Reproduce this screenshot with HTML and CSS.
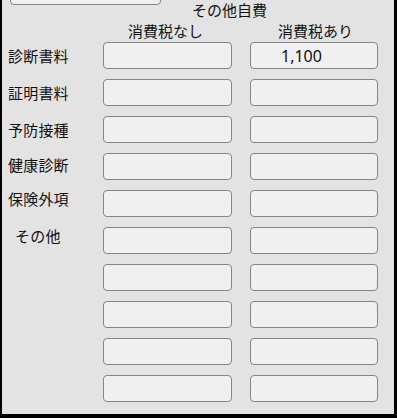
FILE: index.html
```html
<!DOCTYPE html>
<html lang="ja">
<head>
<meta charset="utf-8">
<link rel="stylesheet" href="styles.css">
</head>
<body>
<div class="frame">
  <div class="topbar">
    <div class="stub"></div>
    <div class="title">その他自費</div>
  </div>
  <div class="headrow">
    <div class="labelcol"></div>
    <div class="colhead c1">消費税なし</div>
    <div class="colhead c2">消費税あり</div>
  </div>
  <div class="rows">
    <div class="row">
      <div class="label l1">診断書料</div>
      <input class="field c1" type="text" readonly value="">
      <input class="field c2" type="text" readonly value="1,100">
    </div>
    <div class="row">
      <div class="label l1">証明書料</div>
      <input class="field c1" type="text" readonly value="">
      <input class="field c2" type="text" readonly value="">
    </div>
    <div class="row">
      <div class="label l1">予防接種</div>
      <input class="field c1" type="text" readonly value="">
      <input class="field c2" type="text" readonly value="">
    </div>
    <div class="row">
      <div class="label l0">健康診断</div>
      <input class="field c1" type="text" readonly value="">
      <input class="field c2" type="text" readonly value="">
    </div>
    <div class="row">
      <div class="label up">保険外項</div>
      <input class="field c1" type="text" readonly value="">
      <input class="field c2" type="text" readonly value="">
    </div>
    <div class="row">
      <div class="label up indent">その他</div>
      <input class="field c1" type="text" readonly value="">
      <input class="field c2" type="text" readonly value="">
    </div>
    <div class="row">
      <div class="label"></div>
      <input class="field c1" type="text" readonly value="">
      <input class="field c2" type="text" readonly value="">
    </div>
    <div class="row">
      <div class="label"></div>
      <input class="field c1" type="text" readonly value="">
      <input class="field c2" type="text" readonly value="">
    </div>
    <div class="row">
      <div class="label"></div>
      <input class="field c1" type="text" readonly value="">
      <input class="field c2" type="text" readonly value="">
    </div>
    <div class="row">
      <div class="label"></div>
      <input class="field c1" type="text" readonly value="">
      <input class="field c2" type="text" readonly value="">
    </div>
  </div>
</div>
</body>
</html>
```

FILE: styles.css
```css
html, body {
  margin: 0;
  padding: 0;
  background: #000;
}

.frame {
  box-sizing: border-box;
  width: 397px;
  height: 418px;
  background: #e3e3e3;
  border-left: 2px solid #000;
  border-right: 3px solid #000;
  border-bottom: 4px solid #000;
  overflow: hidden;
  font-family: "Noto Sans CJK JP", "Noto Sans", sans-serif;
  color: #111;
}

.topbar {
  display: flex;
  align-items: flex-start;
  height: 21px;
}

.stub {
  box-sizing: border-box;
  flex: none;
  width: 151px;
  height: 22px;
  margin-left: 8px;
  margin-top: -17px;
  background: #f0f0f0;
  border: 1px solid #858585;
  border-radius: 4px;
}

.title {
  margin-left: 31px;
  font-size: 15px;
  line-height: 19px;
}

.headrow {
  display: flex;
  height: 21px;
  padding-left: 6px;
}

.labelcol,
.label {
  flex: none;
  width: 95px;
}

.colhead {
  flex: none;
  font-size: 15px;
  line-height: 19px;
  text-align: center;
}

.c1 {
  width: 129px;
  margin-right: 18px;
}

.c2 {
  width: 128px;
}

.colhead.c1 {
  box-sizing: border-box;
  padding-right: 4px;
}

.colhead.c2 {
  box-sizing: border-box;
  padding-left: 3px;
}

.rows {
  display: flex;
  flex-direction: column;
  gap: 10px;
  padding-left: 6px;
}

.row {
  display: flex;
  align-items: center;
  height: 27px;
}

.label {
  font-size: 15px;
  line-height: 19px;
  letter-spacing: 0.2px;
}

.label.l1 {
  margin-bottom: 1px;
}

.label.l0 {
  margin-bottom: 4px;
}

.label.up {
  margin-bottom: 11px;
}

.label.indent {
  box-sizing: border-box;
  padding-left: 7px;
}

.field {
  box-sizing: border-box;
  flex: none;
  height: 27px;
  margin-top: 0;
  margin-bottom: 0;
  margin-left: 0;
  padding: 0 0 0 30px;
  background: #f0f0f0;
  border: 1px solid #858585;
  border-radius: 4px;
  font-family: "Noto Sans", sans-serif;
  font-size: 16px;
  color: #111;
  outline: none;
}
```
